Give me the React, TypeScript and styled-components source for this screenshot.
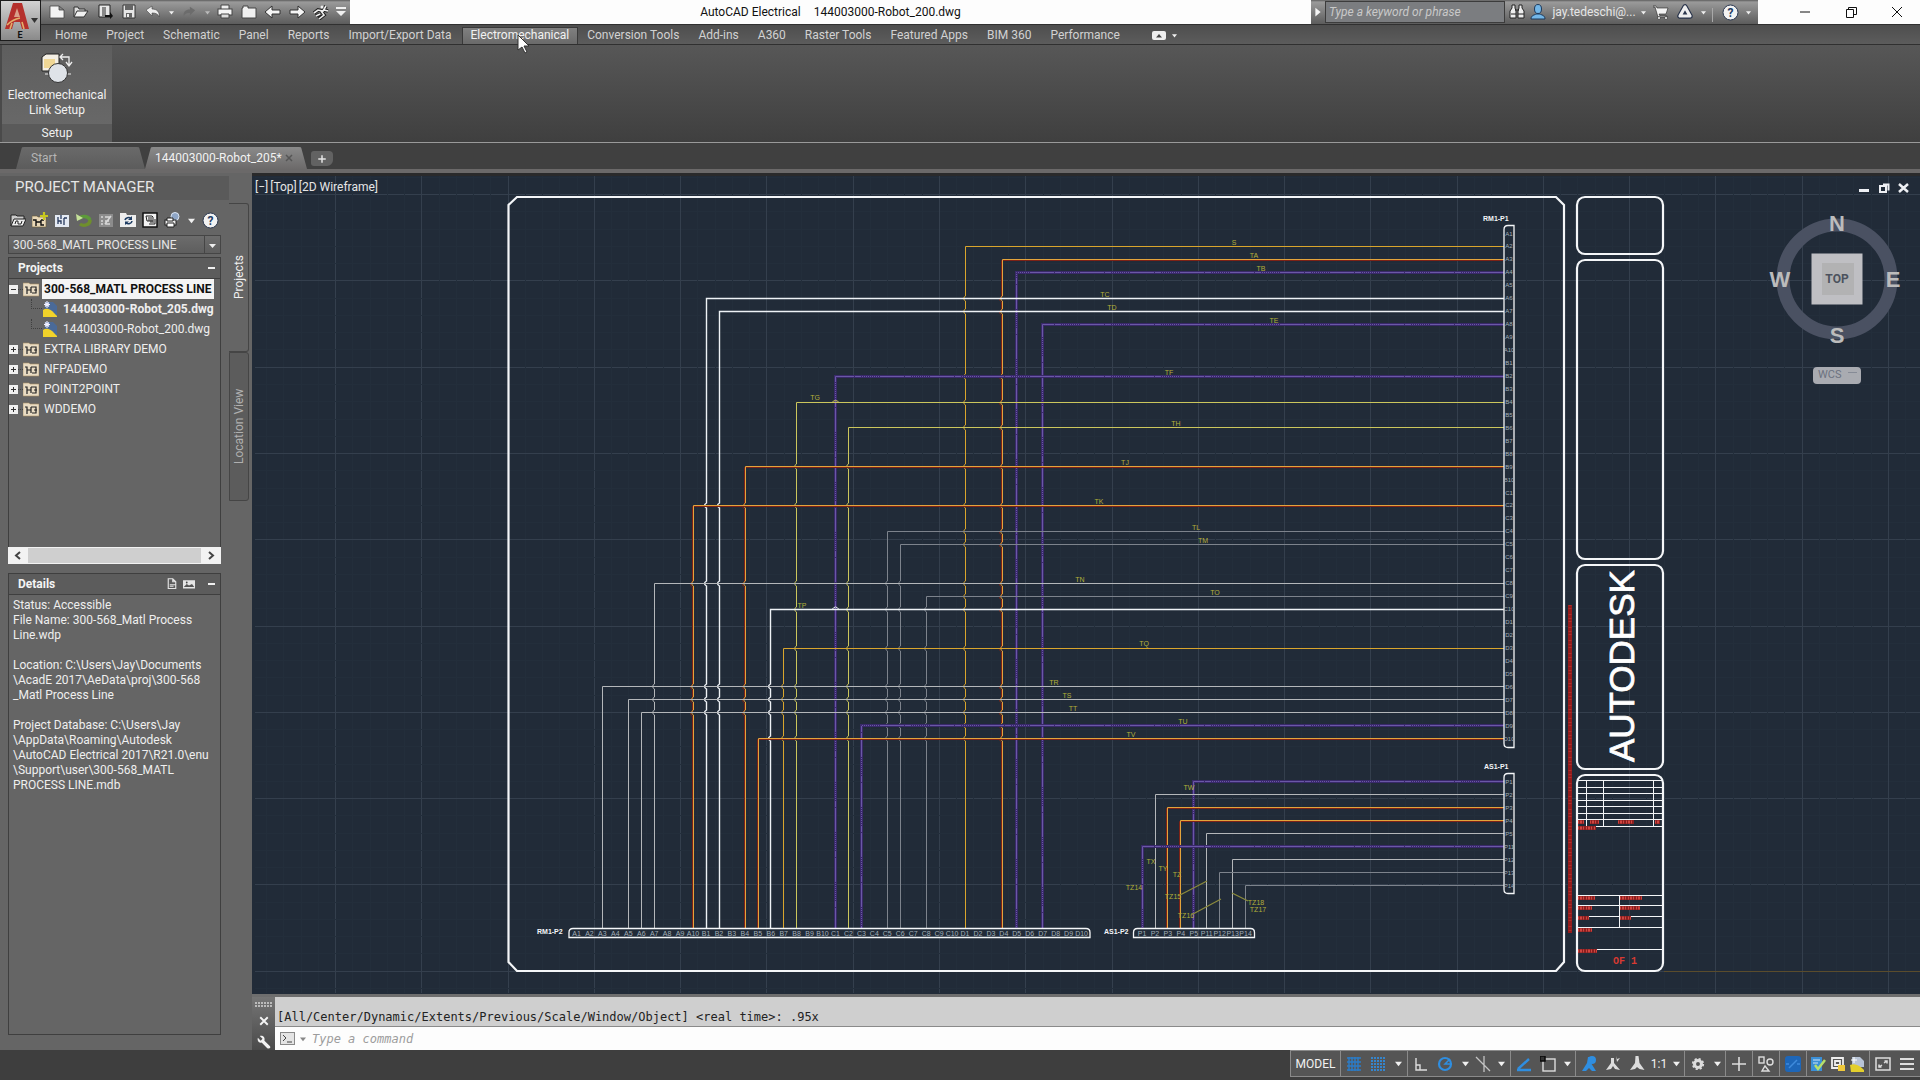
import React from "react";
import styled, { createGlobalStyle, css } from "styled-components";

const ui = `Roboto, "Open Sans", "Liberation Sans", sans-serif`;
const mono = `"DejaVu Sans Mono", "Liberation Mono", monospace`;

const GlobalStyle = createGlobalStyle`
  * { box-sizing: border-box; }
  body { margin: 0; background: #3e3e3e; font-family: ${ui}; font-size: 12px; color: #e6e6e6; overflow: hidden; }
  button, input, select { font: inherit; color: inherit; }
  button { background: none; border: 0; padding: 0; display: inline-flex; align-items: center; justify-content: center; }
  svg { display: block; flex: none; }
`;

const Page = styled.div`
  display: flex;
  flex-direction: column;
  height: 100vh;
`;

/* ---------- title bar ---------- */

const Header = styled.header`
  position: relative;
  flex: none;
`;

const TitleBar = styled.div`
  display: grid;
  grid-template-columns: auto 1fr auto;
  height: 24px;
  background: #fdfdfd;
`;

const metal = css`
  background: linear-gradient(#5e5e5e 0, #9a9a9a 2px, #7e7e7e 50%, #5c5c5c 100%);
`;

const QuickAccess = styled.div`
  ${metal}
  display: flex;
  align-items: center;
  padding: 0 1px 0 45px;
`;

const ToolButton = styled.button<{ $w?: number }>`
  width: ${(p) => p.$w ?? 24}px;
  height: 22px;
  flex: none;
`;

const WindowTitle = styled.h1`
  display: flex;
  justify-content: center;
  gap: 13px;
  margin: 0;
  color: #111;
  font-size: 12px;
  font-weight: 400;
  line-height: 24px;
  white-space: pre;
`;

const TitleRight = styled.div`
  display: flex;
`;

const InfoCenter = styled.div`
  ${metal}
  display: flex;
  align-items: center;
  width: 447px;
`;

const SearchInput = styled.input`
  width: 180px;
  height: 22px;
  padding: 0 3px;
  border: 1px solid #3c3c3c;
  background: #7b7d80;
  font-style: italic;
  &::placeholder { color: #c9c9c9; opacity: 1; }
`;

const Account = styled.button`
  gap: 6px;
  width: 108px;
  white-space: nowrap;
`;

const Divider = styled.span`
  width: 1px;
  height: 14px;
  margin: 6px 5px 0 3px;
  background: #a8a8a8;
`;

const WindowButtons = styled.div`
  display: flex;
  padding-left: 24px;
  color: #111;
`;

const WindowButton = styled.button`
  width: 46px;
  height: 24px;
`;

const AppButton = styled.button`
  position: absolute;
  left: 0;
  top: 0;
  width: 41px;
  height: 41px;
  border: 1px solid #1c1c1c;
  background: linear-gradient(#d2d2d2, #8a8a8a);
`;

/* ---------- ribbon ---------- */

const MenuBar = styled.nav`
  display: flex;
  align-items: stretch;
  height: 20px;
  padding: 2px 0 0 46px;
  border-top: 1px solid #303030;
  background: linear-gradient(#4e4e4e, #5c5c5c);
`;

const MenuTab = styled.button<{ $active?: boolean }>`
  padding: 0 10px 2px 9px;
  color: ${(p) => (p.$active ? "#f2f2f2" : "#d2d2d2")};
  white-space: nowrap;
  ${(p) =>
    p.$active &&
    css`
      border: 1px solid #393939;
      border-bottom: 0;
      padding: 0 8px 2px;
      background: linear-gradient(#808080, #6a6a6a);
    `}
`;

const MenuOptions = styled.button`
  gap: 6px;
  margin-left: 22px;
`;

const Ribbon = styled.section`
  display: flex;
  height: 99px;
  border-top: 1px solid #303030;
  border-bottom: 1px solid #9a9a9a;
  background: linear-gradient(#575757, #3f3f3f);
`;

const RibbonPanel = styled.div`
  display: flex;
  flex-direction: column;
  width: 112px;
  border-left: 2px solid #4a4a4a;
  background: linear-gradient(#5e5e5e, #6a6a6a);
`;

const RibbonCommand = styled.button`
  flex: 1;
  flex-direction: column;
  gap: 4px;
  color: #f0f0f0;
  line-height: 15px;
`;

const RibbonCaption = styled.div`
  height: 18px;
  background: #5a5a5a;
  color: #f0f0f0;
  line-height: 18px;
  text-align: center;
`;

const Cursor = styled.svg`
  position: absolute;
  left: 517px;
  top: 34px;
`;

/* ---------- file tabs ---------- */

const FileTabs = styled.nav`
  display: flex;
  align-items: flex-end;
  flex: none;
  height: 30px;
  padding-left: 16px;
  border-bottom: 4px solid #6b6969;
  background: #404040;
`;

const FileTab = styled.button<{ $active?: boolean }>`
  justify-content: space-between;
  width: ${(p) => (p.$active ? 162 : 129)}px;
  height: 22px;
  padding: 0 ${(p) => (p.$active ? 14 : 16)}px 0 ${(p) => (p.$active ? 10 : 15)}px;
  border-radius: 8px 8px 0 0;
  background: ${(p) => (p.$active ? "linear-gradient(#8a8a8a, #6c6a6a)" : "linear-gradient(#6a6a6a, #5c5c5c)")};
  clip-path: polygon(6px 0, calc(100% - 6px) 0, 100% 100%, 0 100%);
  color: ${(p) => (p.$active ? "#f2f2f2" : "#b5b5b5")};
`;

const NewTab = styled.button`
  width: 22px;
  height: 15px;
  margin: 0 0 3px 4px;
  border-radius: 3px 4px 6px 3px;
  background: #626262;
`;

/* ---------- main ---------- */

const Main = styled.main`
  display: flex;
  flex: 1;
  min-height: 0;
`;

const Palette = styled.aside`
  display: flex;
  flex: none;
  width: 252px;
  background: #656565;
`;

const PaletteMain = styled.div`
  display: flex;
  flex-direction: column;
  width: 229px;
`;

const PaletteTitle = styled.h2`
  height: 24px;
  margin: 3px 0 0;
  padding-left: 15px;
  background: #5a5a5a;
  font-size: 15px;
  font-weight: 400;
  line-height: 22px;
`;

const PaletteTools = styled.div`
  display: flex;
  align-items: center;
  height: 40px;
  padding-left: 7px;
`;

const PaletteBody = styled.div`
  display: flex;
  flex: 1;
  flex-direction: column;
  margin: -5px 8px 15px;
  min-height: 0;
`;

const SelectWrap = styled.label`
  display: grid;
  align-items: center;
  height: 19px;
  margin-bottom: 3px;
  border: 1px solid #454545;
  background: linear-gradient(#6c6c6c, #5e5e5e);
  > * { grid-area: 1 / 1; }
  > svg { justify-self: end; }
`;

const ProjectSelect = styled.select`
  appearance: none;
  width: 100%;
  padding: 0 4px;
  border: 0;
  background: transparent;
`;

const PaneHeader = styled.h3`
  display: flex;
  align-items: center;
  gap: 5px;
  height: 22px;
  margin: 0;
  padding: 0 5px 0 9px;
  border: 1px solid #3f3f3f;
  background: #5c5c5c;
  color: #f4f4f4;
  font-size: 12px;
  font-weight: 700;
  > span { flex: 1; }
`;

const Minus = styled.button`
  width: 8px;
  height: 12px;
  margin-left: 7px;
  &::after { content: ""; width: 7px; height: 2px; background: #f0f0f0; }
`;

const Tree = styled.ul`
  height: 268px;
  margin: 0;
  padding: 0;
  border: 1px solid #3f3f3f;
  border-width: 0 1px;
  list-style: none;
  overflow: hidden;
`;

const TreeRow = styled.li`
  display: flex;
  align-items: center;
  height: 20px;
`;

const TreeLabel = styled.button<{ $bold?: boolean; $selected?: boolean }>`
  height: 20px;
  margin-left: 3px;
  padding: 0 2px;
  white-space: nowrap;
  font-weight: ${(p) => (p.$bold ? 700 : 400)};
  color: ${(p) => (p.$selected ? "#111" : "#efefef")};
  background: ${(p) => (p.$selected ? "#f4f4f4" : "none")};
`;

const ScrollBar = styled.div`
  display: flex;
  align-items: center;
  height: 17px;
  margin-bottom: 9px;
  background: #f2f2f2;
  color: #444;
`;

const Thumb = styled.div`
  flex: 1;
  height: 15px;
  background: #cfcfcf;
`;

const ScrollButton = styled.button`
  width: 20px;
  height: 17px;
`;

const Details = styled.div`
  flex: 1;
  padding: 3px 4px;
  border: 1px solid #3f3f3f;
  border-top: 0;
  color: #efefef;
  line-height: 15px;
  white-space: pre-line;
  p { margin: 0 0 15px; }
`;

const SideTabs = styled.div`
  display: flex;
  flex-direction: column;
  width: 20px;
  margin-top: 30px;
`;

const SideTab = styled.button<{ $active?: boolean }>`
  height: 149px;
  border: 1px solid #454545;
  border-right-style: ${(p) => (p.$active ? "none" : "solid")};
  border-radius: 3px 0 0 3px;
  background: ${(p) => (p.$active ? "none" : "#5c5c5c")};
  color: ${(p) => (p.$active ? "#efefef" : "#b0b0b0")};
  writing-mode: vertical-rl;
  transform: rotate(180deg);
`;

const Workspace = styled.section`
  display: flex;
  flex: 1;
  flex-direction: column;
  min-width: 0;
`;

const Canvas = styled.div`
  position: relative;
  flex: 1;
  min-height: 0;
  background: #212b38;
  box-shadow: inset 0 3px #2a2a2b;
  > svg { width: 100%; height: 100%; }
`;

const ViewControls = styled.div`
  position: absolute;
  left: 3px;
  top: 6px;
  display: flex;
  gap: 2px;
  line-height: 16px;
`;

const CommandLine = styled.div`
  display: grid;
  grid-template-columns: 23px 1fr;
  flex: none;
  border-top: 3px solid #6e6e6e;
  font-family: ${mono};
`;

const CommandGrip = styled.div`
  display: flex;
  flex-direction: column;
  align-items: center;
  justify-content: space-between;
  padding: 5px 0 0;
  background: linear-gradient(#757575, #4a4a4a);
`;

const History = styled.div`
  height: 30px;
  padding: 10px 2px 0;
  background: #cfcfcf;
  border-bottom: 1px solid #8a8a8a;
  color: #222;
  line-height: 20px;
  white-space: nowrap;
`;

const Prompt = styled.label`
  display: flex;
  align-items: center;
  gap: 5px;
  height: 23px;
  padding: 0 5px;
  background: #fdfdfd;
`;

const CommandInput = styled.input`
  flex: 1;
  margin-left: 1px;
  border: 0;
  padding: 0;
  background: none;
  color: #222;
  font-style: italic;
  outline: 0;
  &::placeholder { color: #9c9c9c; opacity: 1; }
`;

/* ---------- status bar ---------- */

const StatusBar = styled.footer`
  display: flex;
  justify-content: flex-end;
  flex: none;
  height: 30px;
  padding-bottom: 3px;
  background: #3e3e3e;
`;

const StatusGroup = styled.div`
  display: flex;
  padding: 0 1px;
  border: 1px solid #8a8a8a;
  border-right: 0;
  background: #555;
  color: #f2f2f2;
`;

const StatusButton = styled.button<{ $w?: number }>`
  width: ${(p) => p.$w ?? 24}px;
`;

/* ---------- icons ---------- */

const Caret = ({ c = "#f0f0f0", s = 7 }: { c?: string; s?: number }) => (
  <svg width={s} height={s} viewBox="0 0 8 8"><path d="M0 2h8L4 7z" fill={c} /></svg>
);

const glyphs: Record<string, React.ReactNode> = {
  fresh: <path d="M1 2h9l5 4v8H1z M10 2v4h5" fill="#f3f3f3" stroke="#444" strokeWidth=".8" />,
  open: <><path d="M1 13V3h4l1 2h6v3" fill="#ddd" stroke="#333" /><path d="M1 13l3-6h11l-4 6z" fill="#f0f0f0" stroke="#333" /></>,
  saveAs: <><path d="M2 1h11v12H2z" fill="#e8e8e8" stroke="#222" /><path d="M5 3h4v9H5z" fill="#888" /><path d="M8 11h5v-3l3 4-3 3v-2H8z" fill="#111" /></>,
  save: <><path d="M2 1h12v13H2z" fill="#e6e6e6" stroke="#333" /><path d="M4 1h8v5H4zM5 9h6v5H5z" fill="#666" /><path d="M6 10h2v3H6z" fill="#eee" /></>,
  undo: <path d="M1 6l6-4v3c5 0 8 3 7 8-1-3-3-4-7-4v3z" fill="#eee" stroke="#444" strokeWidth=".6" />,
  redo: <path d="M15 6L9 2v3c-5 0-8 3-7 8 1-3 3-4 7-4v3z" fill="#6c6c6c" />,
  print: <><path d="M4 1h8v5H4z" fill="#eee" stroke="#444" /><rect x="1" y="5" width="14" height="6" fill="#f5f5f5" stroke="#444" /><path d="M4 10h8v4H4z" fill="#ddd" stroke="#444" /></>,
  folder: <path d="M1 4h1V2h5v2h8v10H1z" fill="#f1f1f1" stroke="#444" />,
  left: <path d="M0 8l7-6v4h8v4H7v4z" fill="#f6f6f6" stroke="#333" />,
  right: <path d="M16 8L9 2v4H1v4h8v4z" fill="#f6f6f6" stroke="#333" />,
  surfer: <g fill="none" stroke="#222" strokeWidth="3.600"><path d="M1 9l4-3 5 1 3-5M8 7l3 4-5 4M11 6l4 1M3 12l4-2" /><path d="M1 9l4-3 5 1 3-5M8 7l3 4-5 4M11 6l4 1M3 12l4-2" stroke="#eee" strokeWidth="1.600" /><circle cx="9" cy="3" r="1.500" fill="#eee" stroke="none" /></g>,
  custom: <g fill="#f0f0f0"><path d="M3 3h10v2H3zM3 7h10l-5 5z" /></g>,
  play: <path d="M5 3l6 5-6 5z" fill="#f5f5f5" />,
  binoculars: <g fill="#eee" stroke="#222"><path d="M3 1h3v3l1 3v7H1V7l2-3zM10 1h3v3l2 3v7H9V7l1-3z" /><path d="M6 6h4M2 10h5M9 10h6" /></g>,
  person: <g fill="#74b7e8" stroke="#1d3a5c"><ellipse cx="8" cy="5" rx="3.500" ry="4.500" /><path d="M1 15c0-4 4-4 5-5h4c1 1 5 1 5 5z" /></g>,
  cart: <g stroke="#222" strokeWidth=".6" fill="#f3f3f3"><path d="M0 2h3l1 2h11l-2 6H6l1 2h7v1H5L2 3H0z" /><circle cx="6" cy="14" r="1.500" /><circle cx="13" cy="14" r="1.500" /></g>,
  a360: <g fill="none"><path d="M8 3L3 12h10z" stroke="#27324a" strokeWidth="5.500" strokeLinejoin="round" /><path d="M8 3L3 12h10z" stroke="#eee" strokeWidth="3.200" strokeLinejoin="round" /></g>,
  min: <path d="M3 8h10" stroke="currentColor" />,
  restore: <path d="M3.500 5.500h7v8h-7zM5.500 5.500v-2h8v7h-3" fill="none" stroke="currentColor" />,
  close: <path d="M3 3l10 10M13 3L3 13" stroke="currentColor" />,
  plus: <path d="M8 3v10M3 8h10" stroke="#e5e5e5" strokeWidth="2" />,
  openProj: <><path d="M1 14V3h5l1 1h7v3" fill="#ccc" stroke="#222" /><path d="M1 14l3-7h12l-3 7z" fill="#eee" stroke="#222" /><path d="M5 12l1-3h2v3h3l1-3" stroke="#222" fill="none" /></>,
  newProj: <><path d="M0 4h5l1 1h8v10H0z" fill="#ead9b8" stroke="#6d5a32" strokeWidth=".6" /><path d="M1 8h3v6M4 10h5M9 8v5h3M9 8h3" stroke="#111" fill="none" strokeWidth="1.400" /><path d="M12 0v8M8 4h8" stroke="#c8c81e" strokeWidth="2.200" /></>,
  wiring: <><rect x="1" y="3" width="14" height="12" fill="#e4eaf3" /><path d="M4 5v7M4 9h3v3M10 6v7M10 6h3M7 3v4" stroke="#27395c" fill="none" strokeWidth="1.300" /></>,
  refresh: <><path d="M3 7a6 5 0 0 1 11 1" fill="none" stroke="#5d9a3a" strokeWidth="3.400" /><path d="M0 2l1 7 6-3z" fill="#c6e29a" /><path d="M14 8a6 5 0 0 1-10 4" fill="none" stroke="#6f8f2c" strokeWidth="3.400" /></>,
  tasks: <><rect x="1" y="2" width="14" height="13" fill="#8c8c8c" /><path d="M3 5h2M3 9h2M3 12h2M7 5h6M7 9h4M7 12h5M13 4l-6 8" stroke="#d8d8d8" strokeWidth="1.500" /></>,
  sync: <><path d="M0 1h6l1 2h9v12H0z" fill="#eee" /><path d="M5 8a3.500 3 0 0 1 6-1.500M12 9a3.500 3 0 0 1-6 1.800" fill="none" stroke="#1f3d63" strokeWidth="1.600" /><path d="M12 4v4H8zM5 13V9.500h4z" fill="#1f3d63" /></>,
  list: <><rect x="1" y="1" width="14" height="14" fill="#f2f2f2" stroke="#111" strokeWidth="1.500" /><path d="M4 4h6l1 1v4H5zM7 12h6V7" fill="none" stroke="#222" /><path d="M6 6h4M6 8h4M8 10h4" stroke="#222" /></>,
  plotter: <><circle cx="11" cy="4.500" r="4" fill="#8fa6c6" stroke="#dde6f3" /><rect x="1" y="8" width="11" height="5" fill="#eee" stroke="#222" /><path d="M3 6h6v3H3zM3 11h7v4H3z" fill="#fff" stroke="#222" /></>,
  page: <path d="M3 1h6l4 4v9H3zM9 1v4h4M5 9h8M5 11h5" fill="none" stroke="#e4e4e4" strokeWidth="1.500" />,
  image: <><rect x="0" y="3" width="16" height="11" fill="#e6e6e6" /><path d="M1 12l4-4 3 2 4-2 3 4z" fill="#555" /><circle cx="5" cy="6" r="1.200" fill="#444" /></>,
  projFolder: <><path d="M0 2h6l1 1h9v12H0z" fill="#e9dcc4" stroke="#a98f62" strokeWidth=".6" /><path d="M2 6h2v7M4 9h4M8 6v6M8 6h5v6H9M11 9h3" stroke="#222" fill="none" strokeWidth="1.200" /></>,
  dwg: <><path d="M3 1h8l4 4v9H3z" fill="#4a6a98" /><path d="M1 9c4-3 8-1 14 6v1H1z" fill="#f2d32b" /><path d="M5 0v7M2 3.500h6M3 1.500l4 4M7 1.500l-4 4" stroke="#eef" strokeWidth="1.100" /></>,
  cross: <path d="M3 3l10 10M13 3L3 13" stroke="#f3f3f3" strokeWidth="2.500" />,
  wrench: <path d="M2 3l3 3 2-2-3-3c3-1 6 1 5 5l6 6c1 2-1 3-3 2L6 8C3 9 1 6 2 3z" fill="#f3f3f3" />,
  grid: <path d="M1 2h14M1 6h14M1 10h14M1 14h14M3 1v14M6 1v14M9 1v14M12 1v14" stroke="#2b7cc8" strokeWidth="1.400" />,
  snap: <path d="M1 2h14M1 5h14M1 8h14M1 11h14M1 14h14" stroke="#3585cc" strokeWidth="2" strokeDasharray="2 1" />,
  ortho: <path d="M3 2v12h11M3 9h4v5" fill="none" stroke="#ddd" strokeWidth="1.400" />,
  polar: <><circle cx="8" cy="8" r="6" fill="none" stroke="#2f8ee0" strokeWidth="2.200" /><path d="M15 8H8l5-5" fill="none" stroke="#2f8ee0" strokeWidth="1.500" /></>,
  iso: <path d="M1 1l14 14M9 0v16" stroke="#c4c4c4" strokeWidth="1.300" />,
  track: <path d="M2 13L13 3M1 14h14" stroke="#2f8ee0" strokeWidth="2.400" />,
  osnap: <><rect x="3" y="3" width="12" height="12" fill="none" stroke="#ddd" strokeWidth="1.400" /><rect x="0" y="0" width="5" height="5" fill="#333" stroke="#0a0a0a" strokeWidth="1.500" /></>,
  annoA: <g fill="#2f8ee0"><path d="M7 1h3v6l5 8h-4l-3-3-3 3H1l5-8z" /><circle cx="11" cy="4" r="4" /></g>,
  annoB: <path d="M6 2h3v5l6 7-5-1-2-3-2 3-5 1 5-7zM11 0l1 3 3-1-3 4z" fill="#ddd" />,
  annoC: <path d="M6.500 0h3l1 7 5 7-5-1-2.500-2L6 13l-5 1 5-7z" fill="#ddd" />,
  gear: <g fill="none" stroke="#ddd"><circle cx="8" cy="8" r="4" strokeWidth="3.500" /><circle cx="8" cy="8" r="6" strokeWidth="2" strokeDasharray="2.500 2.210" /></g>,
  bigPlus: <path d="M8 1v14M1 8h14" stroke="#ddd" strokeWidth="1.600" />,
  shapes: <g fill="none" stroke="#ddd" strokeWidth="1.400"><rect x="1" y="1" width="5" height="6" /><circle cx="12" cy="6" r="3" /><path d="M7 10l4 5H4z" /></g>,
  hardware: <><rect x="0" y="0" width="16" height="16" rx="3" fill="#1d66b8" /><path d="M4 12l8-8M1 8h3M12 8h3" stroke="#3f8bdc" strokeWidth="1.500" /></>,
  check: <><rect x="1" y="1" width="11" height="14" fill="#3b8fd6" /><path d="M3 4h7M3 7h5" stroke="#cfe4f7" /><path d="M5 9l3 4 7-9" stroke="#b6e06c" strokeWidth="2.500" fill="none" /></>,
  lock: <><path d="M2 2h11v10H2zM5 5h5v4H5z" fill="none" stroke="#eee" strokeWidth="1.800" /><rect x="8" y="9" width="7" height="6" fill="#f0c93a" /></>,
  sheet: <><path d="M2 1h8l4 4v6H2z" fill="#b7c3d6" /><path d="M0 9c5-2 9 0 14 5v2H1z" fill="#e3cf2c" /><path d="M4 1v6M1 4h6" stroke="#fff" /></>,
  full: <g fill="none" stroke="#ddd" strokeWidth="1.500"><rect x="1" y="2" width="14" height="12" /><path d="M9 7l3-2M9.500 5H12v2.500M7 9l-3 2M4 8.500V11h2.500" /></g>,
  menu: <path d="M1 3h14M1 8h14M1 13h14" stroke="#ddd" strokeWidth="1.800" />,
};

const Icon = ({ n, s = 16 }: { n: string; s?: number }) => (
  <svg width={s} height={s} viewBox="0 0 16 16" aria-hidden="true">{glyphs[n]}</svg>
);

const HelpIcon = () => (
  <svg width="17" height="17" viewBox="0 0 17 17" aria-hidden="true">
    <circle cx="8.500" cy="8.500" r="7.500" fill="#f2f2f2" stroke="#2b3850" />
    <text x="8.500" y="13" textAnchor="middle" fontSize="12" fontWeight="700" fill="#1f3d63">?</text>
  </svg>
);

/* ---------- drawing data ---------- */

type Kind = "gold" | "red" | "violet" | "white" | "yellow" | "grey" | "silver";
const tint: Record<Kind, string> = {
  gold: "#d9a52c", red: "#e3a43c", violet: "#6a58a6", white: "#eef2f6",
  yellow: "#cbc65c", grey: "#7d838c", silver: "#b4b7ba",
};

type Wire = [x: number, y: number, kind: Kind];

const robotWires: Wire[] = [
  [965, 246, "gold"], [1002, 259, "red"], [1016, 272, "violet"], [706, 298, "white"], [719, 311, "white"],
  [1042, 324, "violet"], [835, 376, "violet"], [796, 402, "yellow"], [848, 427, "yellow"], [745, 466, "red"],
  [693, 505, "red"], [887, 531, "grey"], [900, 544, "grey"], [654, 583, "silver"], [926, 596, "grey"],
  [770, 609, "white"], [783, 648, "gold"], [602, 686, "silver"], [628, 699, "silver"], [641, 712, "silver"],
  [861, 725, "violet"], [758, 738, "red"],
];

const axisWires: Wire[] = [
  [1193, 781, "violet"], [1155, 794, "silver"], [1167, 807, "red"], [1180, 820, "red"], [1206, 833, "silver"],
  [1142, 846, "violet"], [1232, 859, "silver"], [1219, 872, "grey"], [1245, 885, "grey"],
];

const tags: [string, number, number][] = [
  ["S", 1234, 242], ["TA", 1254, 255], ["TB", 1261, 268], ["TC", 1105, 294], ["TD", 1112, 307], ["TE", 1274, 320],
  ["TF", 1169, 372], ["TG", 815, 397], ["TH", 1176, 423], ["TJ", 1125, 462], ["TK", 1099, 501], ["TL", 1196, 527],
  ["TM", 1203, 540], ["TN", 1080, 579], ["TO", 1215, 592], ["TP", 802, 605], ["TQ", 1144, 643], ["TR", 1054, 682],
  ["TS", 1067, 695], ["TT", 1073, 708], ["TU", 1183, 721], ["TV", 1131, 734], ["TW", 1189, 787], ["TX", 1151, 861],
  ["TY", 1163, 868], ["TZ", 1177, 874], ["TZ14", 1134, 887], ["TZ15", 1173, 896], ["TZ16", 1186, 915],
  ["TZ18", 1256, 902], ["TZ17", 1258, 909],
];

const robotPins = ["A", "B", "C", "D"].flatMap((b) => Array.from({ length: 10 }, (_, i) => `${b}${i + 1}`));
const axisPins = ["P1", "P2", "P3", "P4", "P5", "P11", "P12", "P13", "P14"];

const wirePath = ([x, y, kind]: Wire, all: Wire[]) => {
  const hops = kind === "violet" ? [] : all.filter((w) => w[0] < x && w[1] > y).map((w) => w[1]).sort((a, b) => a - b);
  const down = all === robotWires ? hops.map((h) => `V${h - 2}q-4 2.500 0 5`).join("") : "";
  return `M1504 ${y + 0.5}H${x + 0.5}${down}V928`;
};

const Wires = ({ wires }: { wires: Wire[] }) => (
  <g fill="none">
    {wires.map((w) => {
      const d = wirePath(w, wires);
      return (
        <g key={w[1]}>
          {w[2] === "violet" && <path d={d} stroke="#39296a" strokeWidth="3" />}
          {w[2] === "red" && <path d={d} stroke="#7d2216" transform="translate(-1 1)" />}
          <path
            d={d}
            stroke={tint[w[2]]}
            strokeWidth={w[2] === "white" ? 1.4 : 1}
            strokeDasharray={w[2] === "violet" ? "24 1 1 1 1 1 1 1 1 1 1 1 1 1 1 1 1 1 1 1 6 1" : undefined}
          />
        </g>
      );
    })}
  </g>
);

const Grid = () => {
  const step = 86.27;
  const lines: React.ReactNode[] = [];
  for (let i = -5; i < 95; i++) {
    const major = i % 5 === 0;
    const x = Math.floor(335.6 + (i * step) / 5) + 0.5;
    const y = Math.floor(194.7 + (i * step) / 5) + 0.5;
    const c = major ? "#343f4d" : "#232e3b";
    if (x > 255 && x < 1920) lines.push(<path key={`x${i}`} d={`M${x} 176V993`} stroke={c} />);
    if (y > 176 && y < 993) lines.push(<path key={`y${i}`} d={`M255 ${y}H1920`} stroke={c} />);
  }
  return <g>{lines}</g>;
};

const smudges: [number, number, number][] = [
  [1578, 822, 6], [1590, 822, 9], [1618, 822, 16], [1655, 822, 5], [1578, 828, 18], [1578, 898, 17], [1620, 898, 22],
  [1578, 908, 14], [1620, 908, 20], [1578, 918, 11], [1620, 918, 11], [1578, 930, 14], [1578, 951, 19],
];

const Drawing = () => (
  <svg viewBox="252 173 1668 821" role="img" aria-label="Robot wiring diagram">
    <Grid />
    <path d="M1664 971.500H1920" stroke="#5a4c2c" />
    <Wires wires={robotWires} />
    <Wires wires={axisWires} />
    <path d="M832 402.500q3.500-4 7 0" stroke={tint.yellow} fill="none" />
    <path d="M832 609.500q3.500-5 7 0" stroke={tint.white} fill="none" />
    <g fill="none" stroke="#f4f6f8" strokeWidth="2.200">
      <path d="M517 197H1556L1564 205V962L1556 971H517L508.500 962V205z" />
      <rect x="1577" y="197" width="86" height="57" rx="8" />
      <rect x="1577" y="260" width="86" height="299" rx="8" />
      <rect x="1577" y="565" width="86" height="204" rx="8" />
      <rect x="1577" y="775" width="86" height="196" rx="8" />
    </g>
    <g fill="none" stroke="#f4f6f8" strokeWidth="1.300">
      <path d="M1508 225.500h6v522h-6q-4 0-4-4v-514q0-4 4-4z" />
      <path d="M1508 773.500h6v120h-6q-4 0-4-4v-112q0-4 4-4z" />
      <path d="M569 937.500v-5q0-4 4-4h513q4 0 4 4v5z" />
      <path d="M1133.500 937.500v-5q0-4 4-4h113q4 0 4 4v5z" />
    </g>
    <path
      d="M1577 780.500h86M1577 787.500h86M1577 793.500h86M1577 800.500h86M1577 806.500h86M1577 813.500h86M1577 819.500h86M1577 826.500h86M1586.500 780v46M1603.500 780v46M1653.500 780v46M1577 895.500h86M1577 905.500h86M1577 916.500h86M1577 927.500h86M1577 949.500h86M1619.500 895v32"
      stroke="#f4f6f8"
    />
    <g stroke="#8a2020" strokeWidth="4">
      {smudges.map(([x, y, w]) => <path key={`${x}-${y}`} d={`M${x} ${y}h${w}`} />)}
    </g>
    <g stroke="#cf4540" strokeWidth="3" strokeDasharray="1 1 2 1 1 2">
      {smudges.map(([x, y, w]) => <path key={`${x}-${y}`} d={`M${x} ${y}h${w}`} />)}
    </g>
    <path d="M1570 605V933" stroke="#941c1b" strokeWidth="4" />
    <path d="M1570 605V933" stroke="#ad2f2c" strokeWidth="3" strokeDasharray="1 2 1 5 1 3" />
    <g fontFamily="Liberation Sans, sans-serif" fontSize="7" fill="#a3b0b8" textAnchor="middle">
      {robotPins.map((p, i) => <text key={`b${p}`} x={576.5 + i * 12.95} y="935.500">{p}</text>)}
      {axisPins.map((p, i) => <text key={`b${p}`} x={1142 + i * 12.95} y="935.500">{p}</text>)}
    </g>
    <g fontFamily="Liberation Sans, sans-serif" fontSize="6" fill="#a3b0b8" textAnchor="middle">
      {robotPins.map((p, i) => <text key={`r${p}`} x="1509" y={235.5 + i * 12.95}>{p}</text>)}
      {axisPins.map((p, i) => <text key={`r${p}`} x="1509" y={784 + i * 12.95}>{p}</text>)}
    </g>
    <g fontFamily="Liberation Sans, sans-serif" fontSize="7" fill="#b3af3a" textAnchor="middle">
      {tags.map(([t, x, y]) => <text key={t} x={x} y={y + 2.5}>{t}</text>)}
    </g>
    <path d="M1180 895L1207 881M1193 914L1221 899M1232 893L1248 901" stroke="#8b8a3c" strokeWidth="1.300" />
    <g fontFamily="Liberation Sans, sans-serif" fontSize="7" fontWeight="700" fill="#f4f6f8">
      <text x="1483" y="221">RM1-P1</text>
      <text x="1484" y="769">AS1-P1</text>
      <text x="537" y="934">RM1-P2</text>
      <text x="1104" y="934">AS1-P2</text>
    </g>
    <text x="1613" y="964" fontFamily="Liberation Mono, monospace" fontSize="10" fontWeight="700" fill="#d83a32">OF 1</text>
    <text transform="translate(1634 762) rotate(-90)" fontFamily="Liberation Sans, sans-serif" fontSize="35" fill="#fff" stroke="#fff" strokeWidth=".8">AUTODESK</text>

    <circle cx="1837" cy="279" r="54" fill="none" stroke="#4a5162" strokeWidth="13" />
    <rect x="1811.500" y="253.500" width="51" height="51" fill="#bfbfc3" />
    <rect x="1822" y="263" width="32" height="32" fill="#b2b2b3" />
    <g fontFamily="Liberation Sans, sans-serif" fontWeight="700" fontSize="22" fill="#bcbcbc" textAnchor="middle">
      <text x="1837" y="231">N</text>
      <text x="1837" y="343">S</text>
      <text x="1780" y="287">W</text>
      <text x="1893" y="287">E</text>
    </g>
    <text x="1837" y="283" fontSize="12" fontWeight="700" fill="#4c525e" textAnchor="middle">TOP</text>
    <rect x="1813" y="367" width="48" height="17" rx="4" fill="#a9abb1" />
    <text x="1818" y="378" fontSize="11" fill="#6c7280">WCS</text>
    <path d="M1848 372.500h9" stroke="#868b96" />
    <g stroke="#eef0f4" fill="none">
      <path d="M1859 190.500h10" strokeWidth="3" />
      <path d="M1880 186h6v6h-6zM1883 184.500h5.500v6" strokeWidth="2" />
      <path d="M1899 184l9 8M1908 184l-9 8" strokeWidth="2.500" />
    </g>
  </svg>
);

const menu = [
  "Home", "Project", "Schematic", "Panel", "Reports", "Import/Export Data", "Electromechanical", "Conversion Tools",
  "Add-ins", "A360", "Raster Tools", "Featured Apps", "BIM 360", "Performance",
];

const Expander = ({ open }: { open?: boolean }) => (
  <svg width="9" height="9" viewBox="0 0 9 9">
    <rect width="9" height="9" fill="#efefef" />
    <path d={open ? "M2 4.500h5" : "M2 4.500h5M4.500 2v5"} stroke="#333" />
  </svg>
);

const BranchGap = styled.span<{ $w: number }>`
  width: ${(p) => p.$w}px;
  height: 1px;
  background: repeating-linear-gradient(90deg, #3f3f3f 0 1px, transparent 1px 2px);
`;

const ChildGap = styled.span`
  align-self: flex-start;
  width: 11px;
  height: 10px;
  margin-left: 22px;
  border: dotted #3f3f3f;
  border-width: 0 0 1px 1px;
`;

export default function App() {
  return (
    <Page>
      <GlobalStyle />
      <Header>
        <TitleBar>
          <QuickAccess>
            {["fresh", "open", "saveAs", "save", "undo"].map((n) => <ToolButton key={n} aria-label={n}><Icon n={n} /></ToolButton>)}
            <ToolButton $w={12} aria-label="Undo menu"><Caret s={5} /></ToolButton>
            <ToolButton aria-label="redo"><Icon n="redo" s={14} /></ToolButton>
            <ToolButton $w={12} aria-label="Redo menu"><Caret c="#bbb" s={5} /></ToolButton>
            {["print", "folder", "left", "right", "surfer"].map((n) => <ToolButton key={n} aria-label={n}><Icon n={n} /></ToolButton>)}
            <ToolButton $w={16} aria-label="customize"><Icon n="custom" /></ToolButton>
          </QuickAccess>
          <WindowTitle><span>AutoCAD Electrical</span><span>144003000-Robot_200.dwg</span></WindowTitle>
          <TitleRight>
            <InfoCenter>
              <ToolButton $w={14} aria-label="Collapse search"><Icon n="play" s={14} /></ToolButton>
              <SearchInput aria-label="Search" placeholder="Type a keyword or phrase" />
              <ToolButton aria-label="Find"><Icon n="binoculars" /></ToolButton>
              <Account><Icon n="person" />jay.tedeschi@...</Account>
              <ToolButton $w={12} aria-label="Account menu"><Caret s={5} /></ToolButton>
              <ToolButton aria-label="App store"><Icon n="cart" /></ToolButton>
              <ToolButton aria-label="Autodesk A360"><Icon n="a360" /></ToolButton>
              <ToolButton $w={12} aria-label="Connect menu"><Caret s={5} /></ToolButton>
              <Divider />
              <ToolButton aria-label="Help"><HelpIcon /></ToolButton>
              <ToolButton $w={12} aria-label="Help menu"><Caret s={5} /></ToolButton>
            </InfoCenter>
            <WindowButtons>
              <WindowButton aria-label="Minimize"><Icon n="min" /></WindowButton>
              <WindowButton aria-label="Restore"><Icon n="restore" /></WindowButton>
              <WindowButton aria-label="Close"><Icon n="close" /></WindowButton>
            </WindowButtons>
          </TitleRight>
        </TitleBar>
        <MenuBar>
          {menu.map((m) => <MenuTab key={m} $active={m === "Electromechanical"}>{m}</MenuTab>)}
          <MenuOptions aria-label="Ribbon display">
            <svg width="14" height="9" viewBox="0 0 14 9"><rect width="14" height="9" rx="2" fill="#eee" /><path d="M4 6.500h6L7 3z" fill="#444" /></svg>
            <Caret s={5} />
          </MenuOptions>
        </MenuBar>
        <Ribbon>
          <RibbonPanel>
            <RibbonCommand>
              <svg width="32" height="32" viewBox="0 0 32 32" aria-hidden="true">
                <path d="M1 5l4-3h13v14l-3 3H1z" fill="#f4efe4" stroke="#222" />
                <path d="M3 7h11v9H3z" fill="#f0d795" />
                <path d="M20 5h8v8M22 2l-3 3 3 3M25 10l3 4 3-4" fill="none" stroke="#eee" strokeWidth="1.300" />
                <path d="M4 22h26" stroke="#eee" />
                <circle cx="17" cy="21" r="9.500" fill="#dfe3e8" stroke="#333" />
              </svg>
              <span>Electromechanical<br />Link Setup</span>
            </RibbonCommand>
            <RibbonCaption>Setup</RibbonCaption>
          </RibbonPanel>
        </Ribbon>
        <AppButton aria-label="Application menu">
          <svg width="39" height="39" viewBox="0 0 39 39">
            <path d="M4 28L12 2h9l7 26h-7l-2-7h-6l-2 7z" fill="#b5302c" />
            <path d="M13 16l3-9 3 9z" fill="#d9a08a" />
            <path d="M6 24c4-4 8-6 13-7M9 28l2-6M23 28l-2-7" stroke="#e3b06a" strokeWidth="1.600" fill="none" />
            <path d="M30 17h7l-3.500 5z" fill="#333" />
            <text x="19" y="37" textAnchor="middle" fontSize="9" fontWeight="700" fill="#111">E</text>
          </svg>
        </AppButton>
        <Cursor width="13" height="20" viewBox="0 0 13 20"><path d="M1 1v15l4-3 3 6 2-1-3-6h5z" fill="#fff" stroke="#333" /></Cursor>
      </Header>

      <FileTabs>
        <FileTab>Start</FileTab>
        <FileTab $active>
          144003000-Robot_205*
          <svg width="8" height="8" viewBox="0 0 8 8"><path d="M1 1l6 6M7 1L1 7" stroke="#555" strokeWidth="1.500" /></svg>
        </FileTab>
        <NewTab aria-label="New tab"><Icon n="plus" s={12} /></NewTab>
      </FileTabs>

      <Main>
        <Palette>
          <PaletteMain>
            <PaletteTitle>PROJECT MANAGER</PaletteTitle>
            <PaletteTools>
              {["openProj", "newProj", "wiring", "refresh", "tasks", "sync", "list", "plotter"].map((n) => (
                <ToolButton key={n} $w={22} aria-label={n}><Icon n={n} /></ToolButton>
              ))}
              <ToolButton $w={16} aria-label="Plot menu"><Caret /></ToolButton>
              <ToolButton $w={22} aria-label="Help"><HelpIcon /></ToolButton>
            </PaletteTools>
            <PaletteBody>
              <SelectWrap>
                <ProjectSelect aria-label="Active project"><option>300-568_MATL PROCESS LINE</option></ProjectSelect>
                <svg width="16" height="17" viewBox="0 0 16 17"><path d="M.5 0v17" stroke="#454545" /><path d="M5 8h7l-3.500 4z" fill="#eee" /></svg>
              </SelectWrap>
              <PaneHeader><span>Projects</span><Minus aria-label="Collapse projects" /></PaneHeader>
              <Tree>
                <TreeRow><Expander open /><BranchGap $w={5} /><Icon n="projFolder" /><TreeLabel $bold $selected>300-568_MATL PROCESS LINE</TreeLabel></TreeRow>
                <TreeRow><ChildGap /><Icon n="dwg" /><TreeLabel $bold>144003000-Robot_205.dwg</TreeLabel></TreeRow>
                <TreeRow><ChildGap /><Icon n="dwg" /><TreeLabel>144003000-Robot_200.dwg</TreeLabel></TreeRow>
                {["EXTRA LIBRARY DEMO", "NFPADEMO", "POINT2POINT", "WDDEMO"].map((t) => (
                  <TreeRow key={t}><Expander /><BranchGap $w={5} /><Icon n="projFolder" /><TreeLabel>{t}</TreeLabel></TreeRow>
                ))}
              </Tree>
              <ScrollBar>
                <ScrollButton aria-label="Scroll left"><svg width="8" height="9" viewBox="0 0 8 9"><path d="M6 1L2 4.500 6 8" fill="none" stroke="#444" strokeWidth="2" /></svg></ScrollButton>
                <Thumb />
                <ScrollButton aria-label="Scroll right"><svg width="8" height="9" viewBox="0 0 8 9"><path d="M2 1l4 3.500L2 8" fill="none" stroke="#444" strokeWidth="2" /></svg></ScrollButton>
              </ScrollBar>
              <PaneHeader><span>Details</span><Icon n="page" s={12} /><Icon n="image" s={12} /><Minus aria-label="Collapse details" /></PaneHeader>
              <Details>
                <p>{"Status: Accessible\nFile Name: 300-568_Matl Process\nLine.wdp"}</p>
                <p>{"Location: C:\\Users\\Jay\\Documents\n\\AcadE 2017\\AeData\\proj\\300-568\n_Matl Process Line"}</p>
                <p>{"Project Database: C:\\Users\\Jay\n\\AppData\\Roaming\\Autodesk\n\\AutoCAD Electrical 2017\\R21.0\\enu\n\\Support\\user\\300-568_MATL\nPROCESS LINE.mdb"}</p>
              </Details>
            </PaletteBody>
          </PaletteMain>
          <SideTabs>
            <SideTab $active>Projects</SideTab>
            <SideTab>Location View</SideTab>
          </SideTabs>
        </Palette>

        <Workspace>
          <Canvas>
            <Drawing />
            <ViewControls><button>[−]</button><button>[Top]</button><button>[2D Wireframe]</button></ViewControls>
          </Canvas>
          <CommandLine>
            <CommandGrip>
              <svg width="17" height="5" viewBox="0 0 17 5"><path d="M0 1h17M0 4h17" stroke="#bbb" strokeWidth="2" strokeDasharray="2 1" /></svg>
              <Icon n="cross" s={12} />
              <Icon n="wrench" s={15} />
            </CommandGrip>
            <div>
              <History>[All/Center/Dynamic/Extents/Previous/Scale/Window/Object] &lt;real time&gt;: .95x</History>
              <Prompt>
                <svg width="15" height="13" viewBox="0 0 15 13"><rect x=".5" y=".5" width="14" height="12" fill="#e4e4e4" stroke="#8a8a8a" /><path d="M3 3l3 3-3 3M7 10h5" fill="none" stroke="#444" /></svg>
                <Caret c="#888" s={6} />
                <CommandInput aria-label="Command" placeholder="Type a command" />
              </Prompt>
            </div>
          </CommandLine>
        </Workspace>
      </Main>

      <StatusBar>
        <StatusGroup><StatusButton $w={47}>MODEL</StatusButton></StatusGroup>
        <StatusGroup>
          <StatusButton aria-label="Grid"><Icon n="grid" /></StatusButton>
          <StatusButton aria-label="Snap"><Icon n="snap" /></StatusButton>
          <StatusButton $w={16} aria-label="Snap menu"><Caret /></StatusButton>
        </StatusGroup>
        <StatusGroup>
          <StatusButton aria-label="Ortho"><Icon n="ortho" /></StatusButton>
          <StatusButton aria-label="Polar"><Icon n="polar" /></StatusButton>
          <StatusButton $w={16} aria-label="Polar menu"><Caret /></StatusButton>
          <StatusButton $w={20} aria-label="Isodraft"><Icon n="iso" /></StatusButton>
          <StatusButton $w={16} aria-label="Isodraft menu"><Caret /></StatusButton>
        </StatusGroup>
        <StatusGroup>
          <StatusButton aria-label="Tracking"><Icon n="track" /></StatusButton>
          <StatusButton aria-label="Object snap"><Icon n="osnap" /></StatusButton>
          <StatusButton $w={14} aria-label="Object snap menu"><Caret /></StatusButton>
        </StatusGroup>
        <StatusGroup>
          <StatusButton aria-label="Annotation visibility"><Icon n="annoA" /></StatusButton>
          <StatusButton aria-label="Auto scale"><Icon n="annoB" /></StatusButton>
          <StatusButton aria-label="Annotation scale"><Icon n="annoC" /></StatusButton>
          <StatusButton $w={20}>1:1</StatusButton>
          <StatusButton $w={14} aria-label="Scale menu"><Caret /></StatusButton>
        </StatusGroup>
        <StatusGroup>
          <StatusButton aria-label="Workspace"><Icon n="gear" s={14} /></StatusButton>
          <StatusButton $w={14} aria-label="Workspace menu"><Caret /></StatusButton>
        </StatusGroup>
        <StatusGroup><StatusButton aria-label="Annotation monitor"><Icon n="bigPlus" /></StatusButton></StatusGroup>
        <StatusGroup><StatusButton aria-label="Isolate objects"><Icon n="shapes" /></StatusButton></StatusGroup>
        <StatusGroup><StatusButton aria-label="Hardware acceleration"><Icon n="hardware" /></StatusButton></StatusGroup>
        <StatusGroup>
          <StatusButton $w={20} aria-label="Standards"><Icon n="check" /></StatusButton>
          <StatusButton $w={20} aria-label="Lock"><Icon n="lock" /></StatusButton>
          <StatusButton $w={20} aria-label="Sheet"><Icon n="sheet" /></StatusButton>
        </StatusGroup>
        <StatusGroup>
          <StatusButton aria-label="Clean screen"><Icon n="full" /></StatusButton>
          <StatusButton aria-label="Customization"><Icon n="menu" /></StatusButton>
        </StatusGroup>
      </StatusBar>
    </Page>
  );
}
